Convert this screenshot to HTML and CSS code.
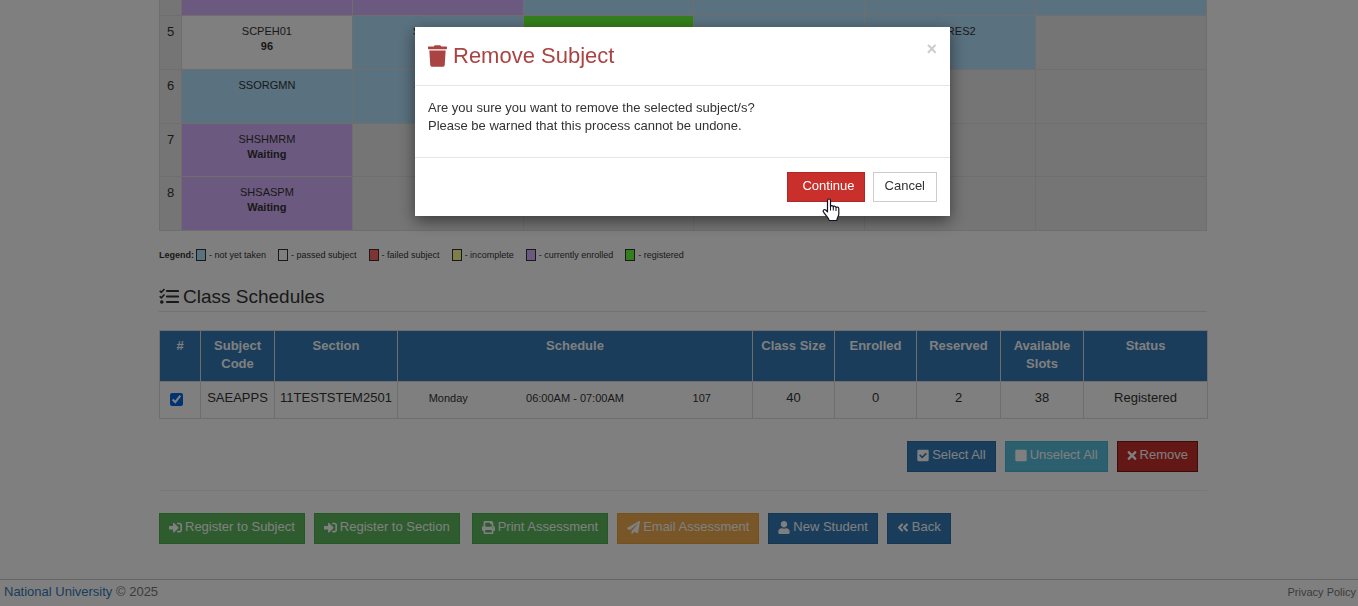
FILE: index.html
```html
<!DOCTYPE html>
<html lang="en">
<head>
<meta charset="utf-8">
<title>Class Schedules</title>
<link rel="stylesheet" href="styles.css">
</head>
<body>
<div class="page">
  <main class="container">
    <table class="curriculum">
      <colgroup><col class="col-no"><col class="col-term"><col class="col-term"><col class="col-term"><col class="col-term"><col class="col-term"><col class="col-term"></colgroup>
      <tbody>
        <tr class="row-cut"><th></th><td class="enrolled"></td><td class="enrolled"></td><td class="open"></td><td class="open"></td><td class="open"></td><td class="open"></td></tr>
        <tr><th scope="row">5</th><td class="passed">SCPEH01<br><b>96</b></td><td class="open">SCPEH02</td><td class="registered">SAEAPPS</td><td class="open"></td><td class="open">SAPRES2</td><td></td></tr>
        <tr><th scope="row">6</th><td class="open">SSORGMN</td><td class="open">SSBFINC</td><td></td><td></td><td></td><td></td></tr>
        <tr class="row-short"><th scope="row">7</th><td class="enrolled">SHSHMRM<br><b>Waiting</b></td><td></td><td></td><td></td><td></td><td></td></tr>
        <tr><th scope="row">8</th><td class="enrolled">SHSASPM<br><b>Waiting</b></td><td></td><td></td><td></td><td></td><td></td></tr>
      </tbody>
    </table>

    <ul class="legend">
      <li><b>Legend:</b><i class="swatch open"></i>- not yet taken</li>
      <li><i class="swatch passed"></i>- passed subject</li>
      <li><i class="swatch failed"></i>- failed subject</li>
      <li><i class="swatch incomplete"></i>- incomplete</li>
      <li><i class="swatch enrolled"></i>- currently enrolled</li>
      <li><i class="swatch registered"></i>- registered</li>
    </ul>

    <h2 class="section-title">
      <svg class="icon-tasks" viewBox="0 0 20 17" fill="none" stroke="currentColor" stroke-width="1.600"><path d="M8 3h11M8 8.500h11M8 14h11" stroke-width="2.200" stroke-linecap="round"/><path d="M.7 2.800l1.600 1.600L5.500 1M.7 8.300l1.600 1.600L5.500 6.500"/><circle cx="2.800" cy="14" r="1.800" fill="currentColor" stroke="none"/></svg>
      Class Schedules
    </h2>

    <table class="schedules">
      <colgroup><col class="w41"><col class="w74"><col class="w123"><col class="w355"><col class="w82"><col class="w82"><col class="w84"><col class="w83"><col class="w124"></colgroup>
      <thead>
        <tr><th>#</th><th>Subject Code</th><th>Section</th><th>Schedule</th><th>Class Size</th><th>Enrolled</th><th>Reserved</th><th>Available Slots</th><th>Status</th></tr>
      </thead>
      <tbody>
        <tr>
          <td class="pick"><input type="checkbox" checked aria-label="Select SAEAPPS"></td>
          <td>SAEAPPS</td><td>11TESTSTEM2501</td>
          <td><div class="slot"><span>Monday</span><span>06:00AM - 07:00AM</span><span>107</span></div></td>
          <td>40</td><td>0</td><td>2</td><td>38</td><td>Registered</td>
        </tr>
      </tbody>
    </table>

    <div class="row-actions">
      <button class="btn primary" type="button"><svg viewBox="0 0 448 512"><path fill-rule="evenodd" d="M400 480H48c-26.500 0-48-21.500-48-48V80c0-26.500 21.500-48 48-48h352c26.500 0 48 21.500 48 48v352c0 26.500-21.500 48-48 48zM204.700 362.700l160-160c6.200-6.200 6.200-16.400 0-22.600l-22.600-22.600c-6.200-6.200-16.400-6.200-22.600 0L193.400 283.600l-64.900-65c-6.200-6.200-16.400-6.200-22.600 0l-22.600 22.600c-6.200 6.200-6.200 16.400 0 22.600l98.800 98.900c6.200 6.200 16.400 6.200 22.600 0z"/></svg>Select All</button>
      <button class="btn info" type="button"><svg viewBox="0 0 448 512"><rect y="32" width="448" height="448" rx="48"/></svg>Unselect All</button>
      <button class="btn danger dark" type="button"><svg class="narrow" viewBox="0 0 352 512"><path d="M242.700 256l100.100-100.100c12.300-12.300 12.300-32.200 0-44.500l-22.200-22.200c-12.300-12.300-32.200-12.300-44.500 0L176 189.300 75.900 89.200c-12.300-12.300-32.200-12.300-44.500 0L9.200 111.500c-12.300 12.300-12.300 32.200 0 44.500L109.300 256 9.200 356.100c-12.300 12.300-12.300 32.200 0 44.500l22.200 22.200c12.300 12.300 32.200 12.300 44.500 0L176 322.700l100.100 100.100c12.300 12.300 32.200 12.300 44.500 0l22.200-22.200c12.300-12.300 12.300-32.200 0-44.500z"/></svg>Remove</button>
    </div>

    <div class="page-actions">
      <div class="group">
        <button class="btn success" type="button"><svg class="wide" viewBox="0 0 512 512"><path d="M416 448h-84c-6.600 0-12-5.400-12-12v-40c0-6.600 5.400-12 12-12h84c17.700 0 32-14.300 32-32V160c0-17.700-14.300-32-32-32h-84c-6.600 0-12-5.400-12-12V76c0-6.600 5.400-12 12-12h84c53 0 96 43 96 96v192c0 53-43 96-96 96zm-47-201L201 79c-15-15-41-4.500-41 17v96H24c-13.300 0-24 10.700-24 24v96c0 13.300 10.700 24 24 24h136v96c0 21.500 26 32 41 17l168-168c9.300-9.400 9.300-24.600 0-34z"/></svg>Register to Subject</button>
        <button class="btn success" type="button"><svg class="wide" viewBox="0 0 512 512"><path d="M416 448h-84c-6.600 0-12-5.400-12-12v-40c0-6.600 5.400-12 12-12h84c17.700 0 32-14.300 32-32V160c0-17.700-14.300-32-32-32h-84c-6.600 0-12-5.400-12-12V76c0-6.600 5.400-12 12-12h84c53 0 96 43 96 96v192c0 53-43 96-96 96zm-47-201L201 79c-15-15-41-4.500-41 17v96H24c-13.300 0-24 10.700-24 24v96c0 13.300 10.700 24 24 24h136v96c0 21.500 26 32 41 17l168-168c9.300-9.400 9.300-24.600 0-34z"/></svg>Register to Section</button>
      </div>
      <div class="group">
        <button class="btn success" type="button"><svg class="wide" viewBox="0 0 512 512"><path fill-rule="evenodd" d="M448 192V77.250c0-8.490-3.370-16.620-9.370-22.630L393.370 9.370c-6-6-14.140-9.370-22.630-9.370H96C78.330 0 64 14.330 64 32v160c-35.350 0-64 28.650-64 64v112c0 8.840 7.160 16 16 16h48v96c0 17.670 14.330 32 32 32h320c17.670 0 32-14.330 32-32v-96h48c8.840 0 16-7.160 16-16V256c0-35.350-28.650-64-64-64zm-64 256H128v-96h256v96zm0-224H128V64h192v48c0 8.840 7.160 16 16 16h48v96zm48 72c-13.250 0-24-10.750-24-24s10.750-24 24-24 24 10.750 24 24-10.740 24-24 24z"/></svg>Print Assessment</button>
        <button class="btn warning" type="button"><svg class="wide" viewBox="0 0 512 512"><path d="M476 3.200L12.500 270.600c-18.100 10.400-15.800 35.600 2.200 43.200L121 358.400l287.300-253.200c5.500-4.900 13.300 2.600 8.600 8.300L176 407v80.500c0 23.600 28.500 32.900 42.500 15.800L282 426l124.600 52.200c14.200 6 30.400-2.900 33-18.200l72-432C515 7.800 493.300-6.800 476 3.200z"/></svg>Email Assessment</button>
        <button class="btn primary" type="button"><svg viewBox="0 0 448 512"><path d="M224 256c70.700 0 128-57.300 128-128S294.700 0 224 0 96 57.300 96 128s57.300 128 128 128zm89.600 32h-16.700c-22.200 10.200-46.900 16-72.900 16s-50.600-5.800-72.900-16h-16.700C60.200 288 0 348.200 0 422.400V464c0 26.500 21.500 48 48 48h352c26.500 0 48-21.500 48-48v-41.600c0-74.200-60.200-134.400-134.400-134.400z"/></svg>New Student</button>
        <button class="btn primary" type="button"><svg viewBox="0 0 448 512"><path d="M223.700 239l136-136c9.400-9.400 24.600-9.400 33.900 0l22.600 22.600c9.400 9.400 9.400 24.600 0 33.900L319.900 256l96.400 96.400c9.400 9.400 9.400 24.600 0 33.900L393.700 409c-9.400 9.400-24.600 9.400-33.900 0l-136-136c-9.500-9.400-9.500-24.600-.1-34zm-192 34l136 136c9.400 9.400 24.600 9.400 33.900 0l22.600-22.600c9.400-9.400 9.400-24.600 0-33.900L127.900 256l96.400-96.400c9.400-9.400 9.400-24.600 0-33.900L201.700 103c-9.400-9.400-24.600-9.400-33.900 0l-136 136c-9.500 9.400-9.500 24.600-.1 34z"/></svg>Back</button>
      </div>
    </div>
  </main>

  <footer class="footer">
    <div><a href="#">National University</a> © 2025</div>
    <a class="policy" href="#">Privacy Policy</a>
  </footer>
</div>

<div class="backdrop">
  <div class="modal" role="dialog" aria-modal="true" aria-labelledby="modal-title">
    <header class="modal-header">
      <svg class="icon-trash" viewBox="0 0 448 512"><path d="M432 32H312l-9.400-18.700A24 24 0 0 0 281.100 0H166.800a23.720 23.720 0 0 0-21.400 13.300L136 32H16A16 16 0 0 0 0 48v32a16 16 0 0 0 16 16h416a16 16 0 0 0 16-16V48a16 16 0 0 0-16-16zM53.200 467a48 48 0 0 0 47.900 45h245.800a48 48 0 0 0 47.900-45L416 128H32z"/></svg>
      <h1 id="modal-title">Remove Subject</h1>
      <button class="close" type="button" aria-label="Close">×</button>
    </header>
    <div class="modal-body">
      <p>Are you sure you want to remove the selected subject/s?<br>Please be warned that this process cannot be undone.</p>
    </div>
    <div class="modal-footer">
      <button class="btn danger confirm" type="button">Continue
        <svg class="pointer" viewBox="0 0 18 24"><path d="M5.500 2.500c0-2 3-2 3 0v6c.3-1.200 2.600-1.200 2.800.4.500-1.100 2.500-.9 2.700.6.800-.9 2.800-.6 2.800 1.200v5.300c0 2.500-1.800 3.500-2 6.500H7.300c-.5-2.500-3.300-4.500-5.800-8.500-1-1.800.8-3.200 2.200-2l1.800 1.800z" fill="#fff" stroke="#111122" stroke-width="1.200" stroke-linejoin="round"/><path d="M8.500 8.500v4M11.300 9v3.500M14 9.500v3.500" stroke="#111122" fill="none"/></svg>
      </button>
      <button class="btn plain" type="button">Cancel</button>
    </div>
  </div>
</div>
</body>
</html>
```
FILE: styles.css
```css
* { box-sizing: border-box; }

body {
  margin: 0;
  background: #fff;
  color: #333;
  font: 13px/18px "Liberation Sans", Arial, sans-serif;
}

.page {
  min-height: 100vh;
  display: flex;
  flex-direction: column;
}

.container {
  width: 100%;
  max-width: 1056px;
  margin: 0 auto;
  padding-left: 8px;
  flex: 1;
}

table {
  width: 100%;
  border-collapse: collapse;
  table-layout: fixed;
}

th, td {
  border: 1px solid #ddd;
  vertical-align: top;
  text-align: center;
}

.open { background: #b4e2ff; }
.passed { background: #fff; }
.failed { background: #ff6666; }
.incomplete { background: #ffff99; }
.enrolled { background: #d8b2ff; }
.registered { background: #68ff36; }

/* Curriculum grid */
.curriculum { background: #ebebeb; }
.col-no { width: 22px; }
.curriculum tr { height: 54px; }
.curriculum .row-short { height: 53px; }
.curriculum .row-cut { height: 15px; }
.curriculum .row-cut > * { padding: 0; border-top: 0; }
.curriculum th { padding: 7px 0; font-weight: normal; }
.curriculum td { padding: 8px; font-size: 11px; line-height: 15px; }

/* Legend */
.legend {
  display: flex;
  flex-wrap: wrap;
  gap: 10px;
  margin: 18px 0 0;
  padding: 0;
  list-style: none;
  font-size: 9px;
  line-height: 12px;
}
.legend li { display: flex; align-items: center; }
.swatch {
  width: 10px;
  height: 12px;
  margin: 0 3px 0 2px;
  border: 1px solid #333;
}

/* Schedules */
.section-title {
  display: flex;
  align-items: center;
  gap: 4px;
  margin: 25px 0 18px;
  padding-bottom: 3px;
  border-bottom: 1px solid #e5e5e5;
  font-size: 19px;
  font-weight: normal;
  line-height: 22px;
}
.icon-tasks { width: 20px; height: 17px; }

.schedules th {
  padding: 6px 7px 8px;
  background: #337ab7;
  color: #fff;
}
.schedules td { padding: 7px 0 11px; }
.schedules .pick { padding: 9px 7px 0 0; }
.pick input { display: block; width: 13px; height: 13px; margin: 2px auto 0; accent-color: #0067e0; }
.w41 { width: 41px; }
.w74 { width: 74px; }
.w123 { width: 123px; }
.w355 { width: 355px; }
.w82 { width: 82px; }
.w83 { width: 83px; }
.w84 { width: 84px; }
.w124 { width: 124px; }
.slot {
  display: grid;
  grid-template-columns: 1fr 2fr 1fr;
  padding: 0 8px;
  font-size: 11px;
}

/* Buttons */
.btn {
  display: inline-flex;
  align-items: center;
  gap: 3px;
  height: 31px;
  padding: 0 9px 2px;
  border: 1px solid;
  font: inherit;
  color: #fff;
}
.btn svg { width: 12px; height: 13px; fill: currentColor; }
.btn .wide { width: 13px; }
.btn .narrow { width: 10px; }
.primary { background: #337ab7; border-color: #2e6da4; }
.success { background: #5cb85c; border-color: #4cae4c; }
.info { background: #5bc0de; border-color: #46b8da; }
.warning { background: #f0ad4e; border-color: #eea236; }
.danger { background: #c9302c; border-color: #ac2925; }
.dark { border-color: #761c19; }
.plain { background: #fff; border-color: #ccc; color: #333; }

.row-actions {
  display: flex;
  justify-content: flex-end;
  gap: 9px;
  padding: 22px 9px 18px 0;
  border-bottom: 1px solid #eee;
}
.page-actions {
  display: flex;
  flex-wrap: wrap;
  gap: 12px;
  padding: 22px 0;
}
.group { display: flex; gap: 9px; }

.footer {
  display: flex;
  justify-content: space-between;
  padding: 3px 2px 5px 4px;
  border-top: 1px solid #ccc;
  color: #777;
}
.footer a { color: #337ab7; text-decoration: none; }
.footer .policy { color: #777; font-size: 11px; }

/* Dialog */
.backdrop {
  position: fixed;
  inset: 0;
  padding: 27px 0 0 7px;
  background: rgba(0, 0, 0, .5);
}
.modal {
  max-width: 535px;
  margin: 0 auto;
  background: #fff;
  box-shadow: 0 5px 15px rgba(0, 0, 0, .5);
}
.modal-header {
  display: flex;
  align-items: center;
  gap: 6px;
  padding: 14px 13px;
  border-bottom: 1px solid #e5e5e5;
  color: #a94442;
}
.modal-header h1 {
  flex: 1;
  margin: 0;
  font-size: 22px;
  font-weight: normal;
  line-height: 30px;
}
.icon-trash { width: 19px; height: 22px; fill: currentColor; }
.close {
  align-self: flex-start;
  padding: 0;
  border: 0;
  background: none;
  color: #ccc;
  font: bold 18px/16px "Liberation Sans", Arial, sans-serif;
}
.modal-body { padding: 13px 13px 22px; }
.modal-body p { margin: 0; }
.modal-footer {
  display: flex;
  justify-content: flex-end;
  gap: 8px;
  padding: 14px 13px;
  border-top: 1px solid #e5e5e5;
}
.modal-footer .btn { height: 30px; padding: 0 11px 2px; }
.modal-footer .confirm { position: relative; padding-left: 14px; padding-right: 9px; }
.btn .pointer {
  position: absolute;
  left: 34px;
  top: 25px;
  width: 18px;
  height: 24px;
}
```
